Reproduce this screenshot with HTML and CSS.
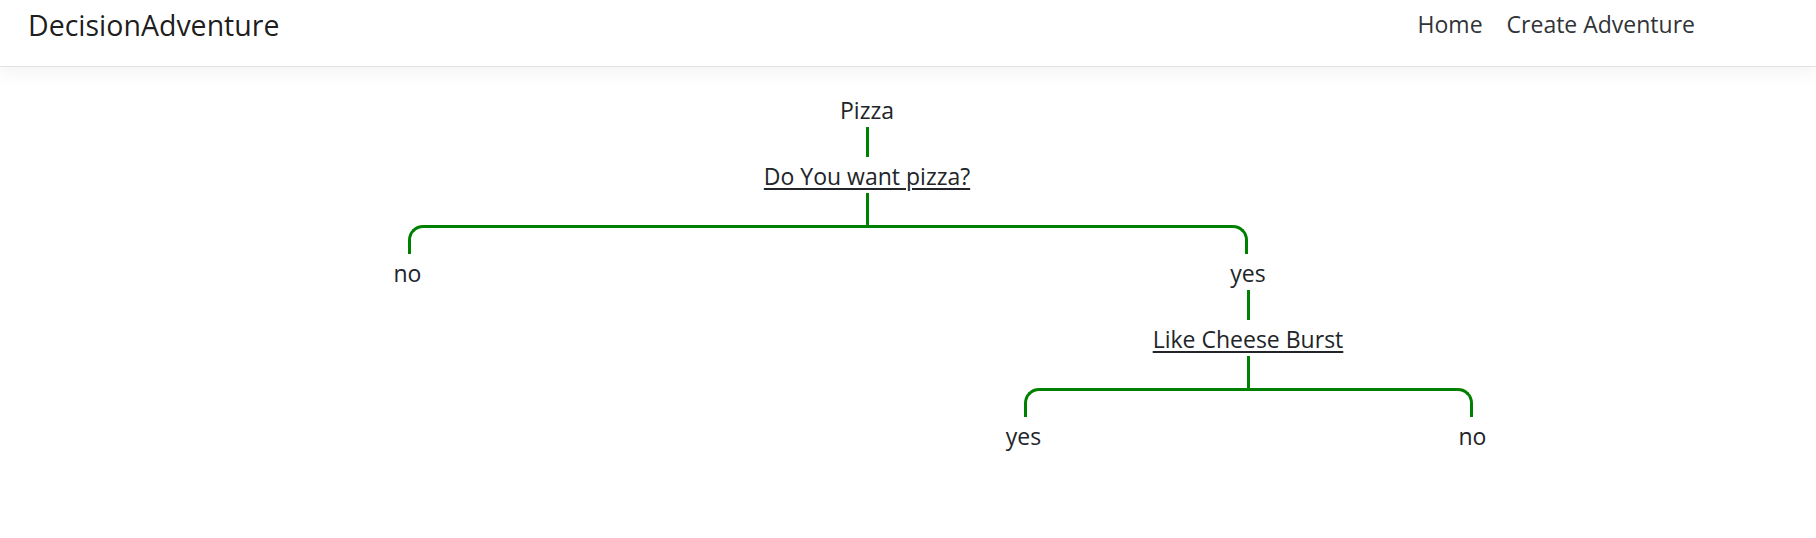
FILE: index.html
```html
<!DOCTYPE html>
<html lang="en">
<head>
<meta charset="utf-8">
<title>DecisionAdventure</title>
<link rel="stylesheet" href="styles.css">
</head>
<body>
<header class="navbar">
  <a class="brand" href="#">DecisionAdventure</a>
  <nav class="nav">
    <a class="nav-link" href="#">Home</a>
    <a class="nav-link" href="#">Create Adventure</a>
  </nav>
</header>
<main class="page">
  <div class="tree">
    <div class="node">
      <div class="head">
        <span class="label">Pizza</span>
        <span class="stem"></span>
        <a class="label question" href="#">Do You want pizza?</a>
        <span class="stem stem-long"></span>
      </div>
      <div class="children">
        <div class="branch branch-first col-no">
          <span class="connector"></span>
          <span class="label">no</span>
        </div>
        <div class="branch branch-last col-yes">
          <span class="connector"></span>
          <div class="node">
            <div class="head">
              <span class="label">yes</span>
              <span class="stem"></span>
              <a class="label question" href="#">Like Cheese Burst</a>
              <span class="stem stem-long"></span>
            </div>
            <div class="children">
              <div class="branch branch-first col-half">
                <span class="connector"></span>
                <span class="label">yes</span>
              </div>
              <div class="branch branch-last col-half">
                <span class="connector"></span>
                <span class="label">no</span>
              </div>
            </div>
          </div>
        </div>
      </div>
    </div>
  </div>
</main>
</body>
</html>
```

FILE: styles.css
```css
* { box-sizing: border-box; }

body {
  margin: 0;
  font-family: "Open Sans", "Noto Sans", "Liberation Sans", sans-serif;
  color: #212529;
  background: #fff;
}

a { color: inherit; text-decoration: none; }

.navbar {
  height: 67px;
  display: flex;
  justify-content: space-between;
  align-items: flex-start;
  padding: 11px 109px 0 28px;
  border-bottom: 1px solid #e3e3e3;
  box-shadow: 0 6px 18px rgba(0, 0, 0, 0.05);
  background: #fff;
}

.brand {
  font-size: 28.5px;
  line-height: 1;
  color: rgba(0, 0, 0, 0.9);
}

.nav {
  display: flex;
  padding-top: 2px;
}

.nav-link {
  font-size: 23px;
  line-height: 1;
  padding: 0 12px;
  color: #303438;
}

.page {
  padding-top: 24px;
}

.tree {
  margin-left: 16px;
  width: 1702px;
}

.node {
  display: flex;
  flex-direction: column;
  align-items: stretch;
}

.head {
  display: flex;
  flex-direction: column;
  align-items: center;
}

.label {
  display: block;
  font-size: 23px;
  line-height: 34px;
  padding-top: 2px;
  height: 36px;
  white-space: nowrap;
  text-align: center;
}

.question {
  text-decoration: underline;
  text-decoration-thickness: 1.5px;
  text-underline-offset: 3px;
  color: #212529;
}

.stem {
  display: block;
  width: 3px;
  height: 30px;
  background: green;
}

.stem-long {
  height: 32px;
}

.children {
  display: flex;
}

.branch {
  display: flex;
  flex-direction: column;
  align-items: center;
}

.connector {
  display: block;
  height: 29px;
  border-top: 3px solid green;
  width: 50%;
  align-self: flex-start;
}

.branch-first > .connector {
  margin-left: 50%;
  border-left: 3px solid green;
  border-top-left-radius: 15px;
}

.branch-last > .connector {
  border-right: 3px solid green;
  border-top-right-radius: 15px;
}

.branch > .node {
  align-self: stretch;
}

.col-no { width: 783px; }
.col-yes { width: 898px; }
.col-half { width: 449px; }
```
